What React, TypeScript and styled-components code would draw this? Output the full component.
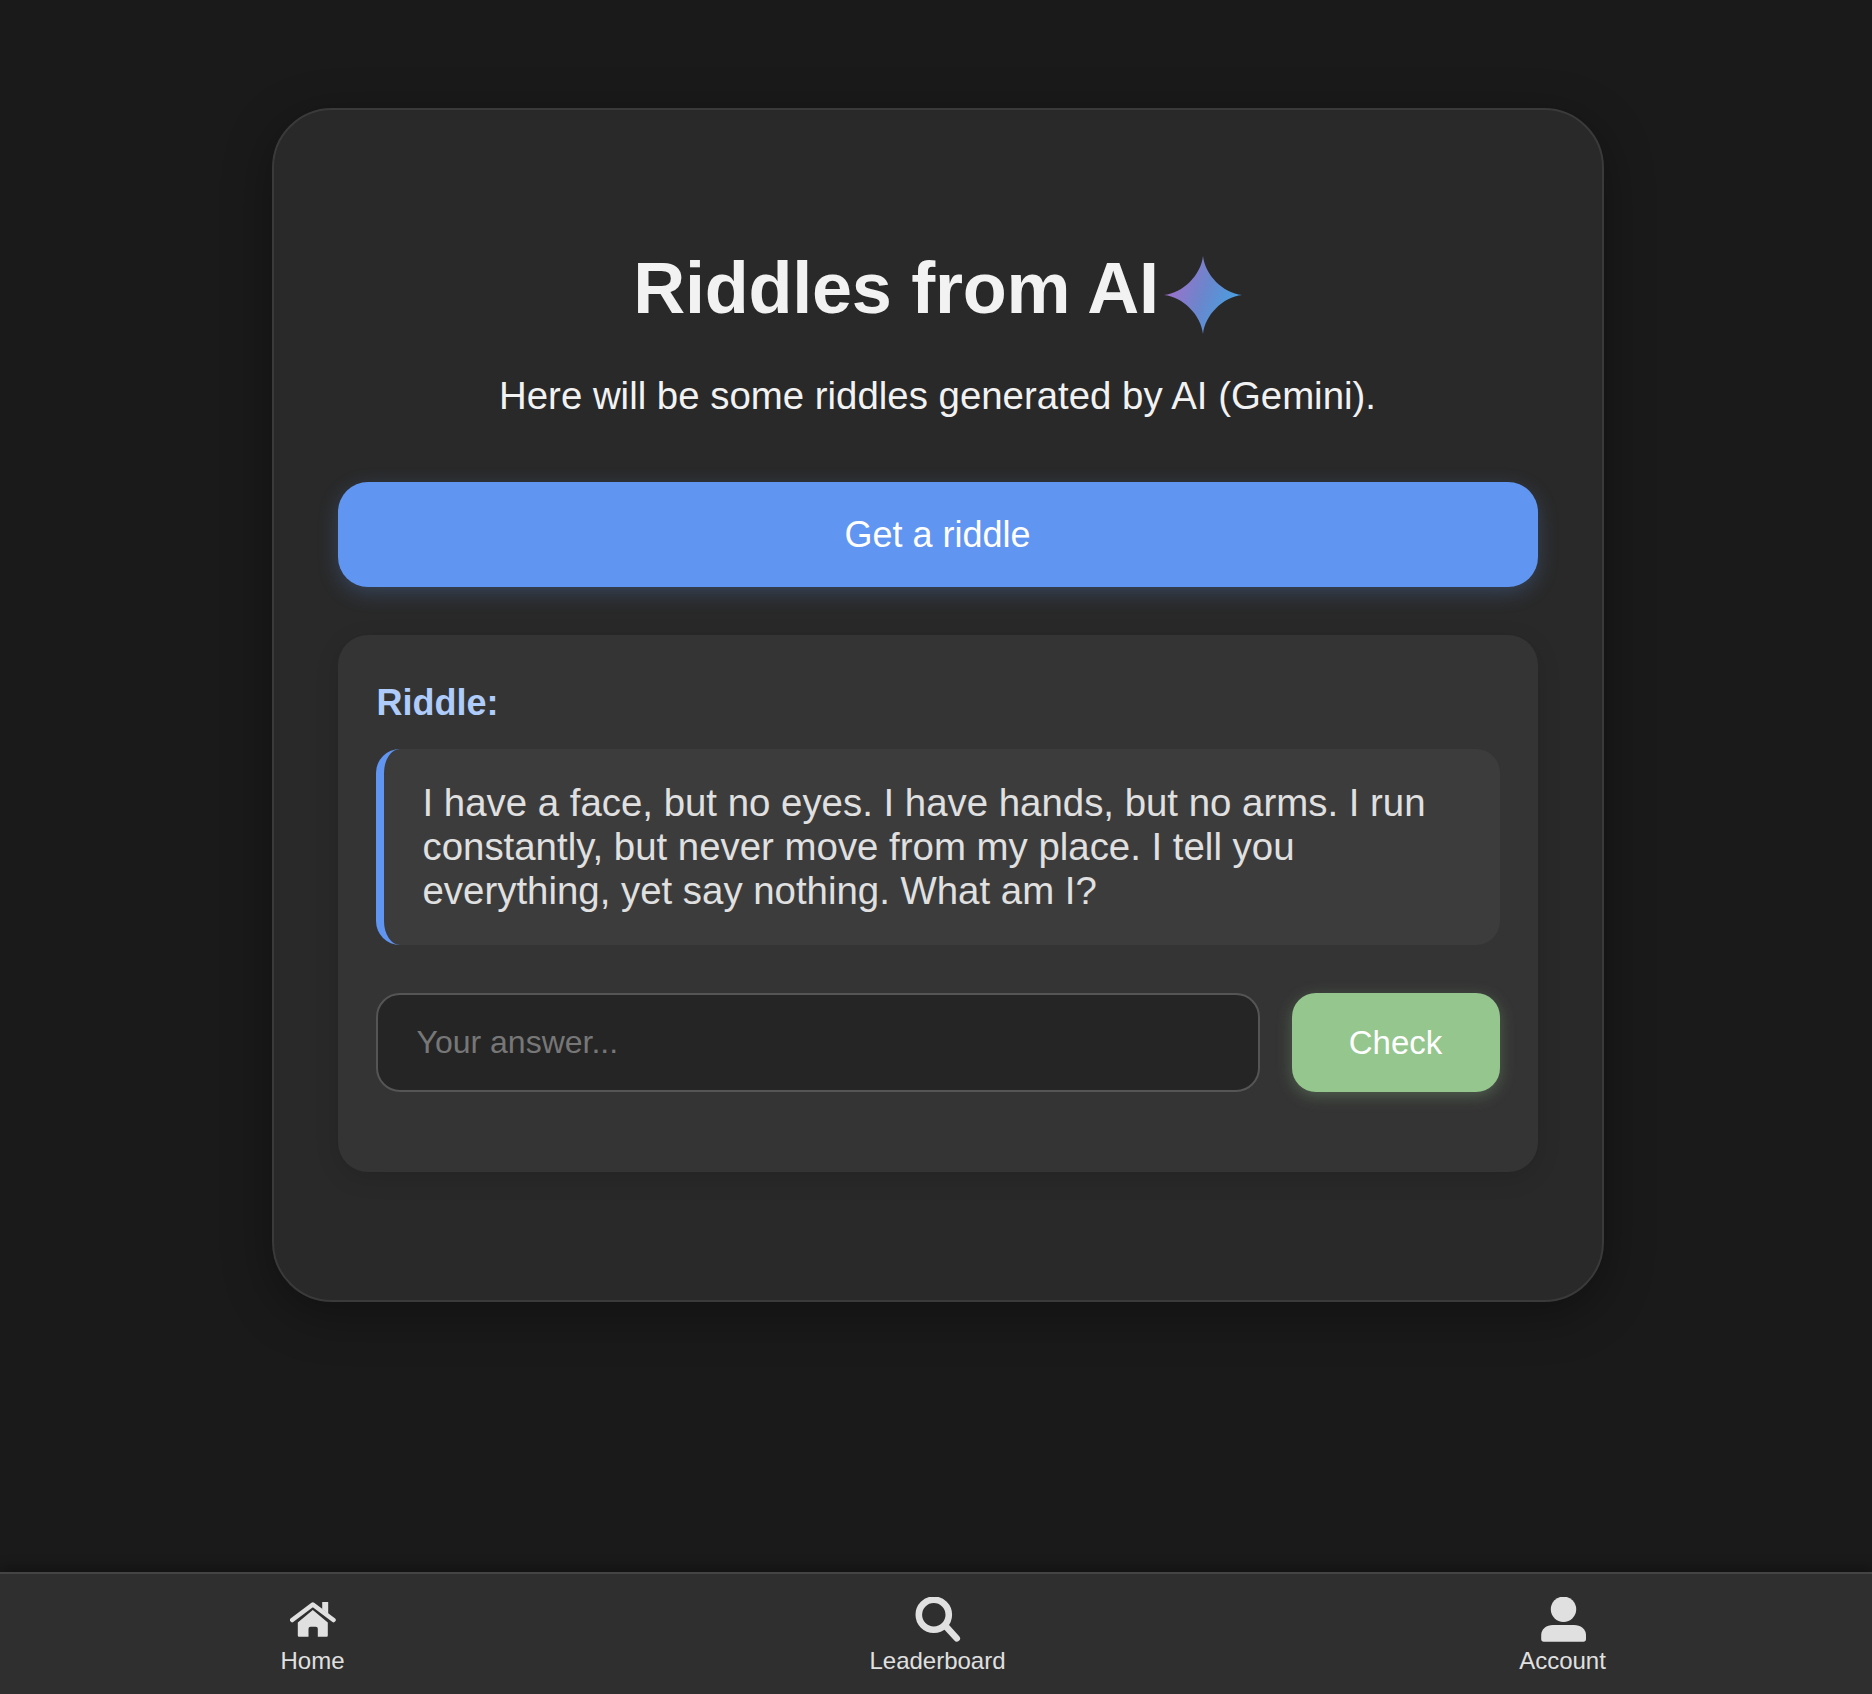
import React from 'react'
import styled, { createGlobalStyle } from 'styled-components'

const GlobalStyle = createGlobalStyle`
  html, body {
    margin: 0;
    padding: 0;
    background: #1a1a1a;
    overflow-x: hidden;
  }
  * {
    box-sizing: border-box;
  }
`

const Page = styled.div`
  width: 1875px;
  height: 1694px;
  display: flex;
  flex-direction: column;
  align-items: center;
  font-family: 'Liberation Sans', Arial, sans-serif;
  background: #1a1a1a;
`

const Main = styled.main`
  flex: 1;
  padding-top: 108px;
`

const Card = styled.section`
  width: 1332px;
  height: 1194px;
  padding: 132px 64px 0;
  background: #292929;
  border: 2px solid #3a3a3a;
  border-radius: 60px;
  box-shadow: 0 12px 48px rgba(0, 0, 0, 0.35);
`

const Title = styled.h1`
  display: flex;
  align-items: center;
  justify-content: center;
  margin: 0 0 40px;
  font-size: 72px;
  line-height: 86px;
  font-weight: 700;
  letter-spacing: -0.25px;
  color: #f2f2f2;
  text-align: center;

  svg {
    margin: 14px 0 0 5px;
  }
`

const Subtitle = styled.p`
  margin: 0 0 64px;
  font-size: 38.4px;
  line-height: 44px;
  color: #f2f2f2;
  text-align: center;
`

const PrimaryButton = styled.button`
  display: block;
  width: 100%;
  height: 105px;
  margin-bottom: 48px;
  border: 0;
  border-radius: 30px;
  background: #6096f1;
  box-shadow: 0 6px 20px rgba(96, 150, 241, 0.25);
  color: #fff;
  font: inherit;
  font-size: 36px;
`

const Panel = styled.div`
  height: 537px;
  padding: 39px 38px;
  background: #343434;
  border-radius: 30px;
  box-shadow: 0 6px 24px rgba(0, 0, 0, 0.12);
`

const PanelLabel = styled.h2`
  margin: 0 0 17px 1px;
  font-size: 36px;
  line-height: 58px;
  font-weight: 700;
  color: #aecbfa;
`

const RiddleText = styled.p`
  margin: 0 0 48px;
  padding: 32px 39px;
  background: #3c3c3c;
  border-left: 8px solid #6096f1;
  border-radius: 24px;
  font-size: 38.4px;
  line-height: 44px;
  color: #e0e0e0;
`

const AnswerRow = styled.form`
  display: flex;
  gap: 32px;
`

const AnswerInput = styled.input`
  flex: 1;
  min-width: 0;
  height: 99px;
  padding: 0 39px;
  background: #252525;
  border: 2px solid #555;
  border-radius: 24px;
  color: #e0e0e0;
  font: inherit;
  font-size: 32px;

  &::placeholder {
    color: #777;
    opacity: 1;
  }
`

const CheckButton = styled.button`
  width: 208px;
  height: 99px;
  border: 0;
  border-radius: 24px;
  background: #94c68e;
  box-shadow: 0 4px 16px rgba(148, 198, 142, 0.3);
  color: #fff;
  font: inherit;
  font-size: 33px;
`

const Nav = styled.nav`
  align-self: stretch;
  display: grid;
  grid-template-columns: repeat(3, 1fr);
  height: 122px;
  background: #2f2f2f;
  border-top: 2px solid #444;
  box-shadow: 0 -4px 12px rgba(0, 0, 0, 0.3);
`

const NavItem = styled.a`
  display: flex;
  flex-direction: column;
  align-items: center;
  justify-content: flex-start;
  padding-top: 22px;
  color: #e0e0e0;
  font-size: 24px;
  line-height: 28px;
`

const IconSlot = styled.span`
  display: flex;
  align-items: center;
  justify-content: center;
  height: 48px;
  margin-bottom: 3px;
  color: #e0e0e0;
`

function Sparkle() {
  return (
    <svg width="78" height="78" viewBox="0 0 78 78" aria-hidden="true">
      <defs>
        <linearGradient id="sparkle" x1="0.1" y1="0.35" x2="0.9" y2="0.65">
          <stop offset="0" stopColor="#9b72cb" />
          <stop offset="0.5" stopColor="#6a86cc" />
          <stop offset="1" stopColor="#4a9fe0" />
        </linearGradient>
      </defs>
      <path d="M39 0C41 19 59 37 78 39C59 41 41 59 39 78C37 59 19 41 0 39C19 37 37 19 39 0Z" fill="url(#sparkle)" />
    </svg>
  )
}

function HomeIcon() {
  return (
    <svg width="46" height="46" viewBox="0 0 46 46" aria-hidden="true">
      <path
        d="M22.8 13L37.8 25.5V38.5Q37.8 39.7 36.6 39.7H27.8V31.7Q27.8 29.7 25.8 29.7H20.5Q18.5 29.7 18.5 31.7V39.7H9Q7.8 39.7 7.8 38.5V25.5Z"
        fill="currentColor"
      />
      <path d="M2.2 23L22.8 7.5L43.5 23" fill="none" stroke="currentColor" strokeWidth="4.5" strokeLinecap="round" strokeLinejoin="round" />
      <path d="M32.2 5H38.2V17L32.2 12Z" fill="currentColor" />
    </svg>
  )
}

function SearchIcon() {
  return (
    <svg width="46" height="46" viewBox="0 0 46 46" fill="none" stroke="currentColor" aria-hidden="true">
      <circle cx="18.8" cy="17.7" r="15" strokeWidth="6.6" />
      <path d="M31.2 29.7L41.8 41.4" strokeWidth="6.5" strokeLinecap="round" />
    </svg>
  )
}

function PersonIcon() {
  return (
    <svg width="46" height="46" viewBox="0 0 46 46" fill="currentColor" aria-hidden="true">
      <circle cx="23.5" cy="12.3" r="12.7" />
      <path d="M13 28H34C40.5 28 46 32 46 38V42Q46 44.7 43.3 44.7H3.9Q1.2 44.7 1.2 42V38C1.2 32 6.5 28 13 28Z" />
    </svg>
  )
}

export default function App() {
  return (
    <>
      <GlobalStyle />
      <Page>
        <Main>
          <Card>
            <Title>
              Riddles from AI
              <Sparkle />
            </Title>
            <Subtitle>Here will be some riddles generated by AI (Gemini).</Subtitle>
            <PrimaryButton type="button">Get a riddle</PrimaryButton>
            <Panel>
              <PanelLabel>Riddle:</PanelLabel>
              <RiddleText>
                I have a face, but no eyes. I have hands, but no arms. I run constantly, but never move from my
                place. I tell you everything, yet say nothing. What am I?
              </RiddleText>
              <AnswerRow>
                <AnswerInput placeholder="Your answer..." />
                <CheckButton type="button">Check</CheckButton>
              </AnswerRow>
            </Panel>
          </Card>
        </Main>
        <Nav>
          <NavItem>
            <IconSlot>
              <HomeIcon />
            </IconSlot>
            Home
          </NavItem>
          <NavItem>
            <IconSlot>
              <SearchIcon />
            </IconSlot>
            Leaderboard
          </NavItem>
          <NavItem>
            <IconSlot>
              <PersonIcon />
            </IconSlot>
            Account
          </NavItem>
        </Nav>
      </Page>
    </>
  )
}
